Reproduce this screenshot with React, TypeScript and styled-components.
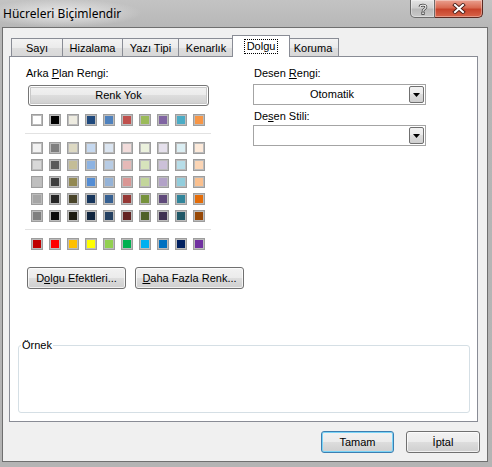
import styled, { createGlobalStyle } from 'styled-components';

const GlobalStyle = createGlobalStyle`
  html, body {
    margin: 0;
    padding: 0;
    background: #b8b8b8;
  }
  body {
    font-family: "Liberation Sans", Arial, sans-serif;
    font-size: 11px;
    color: #000;
  }
`;

const Window = styled.div`
  width: 492px;
  height: 467px;
  box-sizing: border-box;
  padding: 0 4px 0 2px;
  display: flex;
  flex-direction: column;
  background: linear-gradient(#c3c3c3, #b6b6b6 30px, #b4b4b4);
`;

const TitleBar = styled.div`
  height: 27px;
  flex: none;
  display: flex;
  align-items: flex-start;
  margin-left: -2px;
  margin-right: 5px;
  background: radial-gradient(ellipse 80px 14px at 62px 13px, rgba(236, 236, 236, 0.95), rgba(236, 236, 236, 0));
`;

const Title = styled.div`
  flex: 1;
  padding: 6px 0 0 3px;
  font-family: "Noto Sans", "Open Sans", sans-serif;
  font-size: 12px;
  line-height: 15px;
  color: #000;
`;

const CaptionButton = styled.div<{ $close?: boolean }>`
  height: 18px;
  width: ${(p) => (p.$close ? 48 : 25)}px;
  box-sizing: border-box;
  display: flex;
  align-items: center;
  justify-content: center;
  border: 1px solid ${(p) => (p.$close ? '#5b2a22' : '#6b6b6b')};
  border-top: none;
  border-left: ${(p) => (p.$close ? 'none' : '1px solid #6b6b6b')};
  border-radius: ${(p) => (p.$close ? '0 0 5px 0' : '0 0 0 5px')};
  background: ${(p) =>
    p.$close
      ? 'linear-gradient(#eaa090, #d96a52 45%, #c7432b 55%, #d8654a)'
      : 'linear-gradient(#e4e4e4, #cfcfcf 45%, #b9b9b9 55%, #c9c9c9)'};
  box-shadow: inset 0 0 0 1px rgba(255, 255, 255, 0.35);
`;

const Client = styled.div`
  width: 486px;
  height: 435px;
  box-sizing: border-box;
  border: 1px solid #6f6f6f;
  background: #f0f0f0;
  padding: 7px 6px 0 6px;
  display: flex;
  flex-direction: column;
`;

const TabStrip = styled.div`
  height: 21px;
  display: flex;
  align-items: flex-end;
  padding-left: 2px;
  position: relative;
  z-index: 1;
`;

const Tab = styled.div<{ $w: number; $active?: boolean }>`
  width: ${(p) => p.$w}px;
  box-sizing: border-box;
  height: ${(p) => (p.$active ? 22 : 18)}px;
  margin: ${(p) => (p.$active ? '0 -2px -1px -2px' : '0')};
  border: 1px solid #898c95;
  border-bottom: none;
  border-left: ${(p) => (p.$active ? '1px solid #898c95' : 'none')};
  background: ${(p) => (p.$active ? '#fff' : 'linear-gradient(#f3f3f3, #ebebeb 50%, #dedede 50%, #d8d8d8)')};
  display: flex;
  align-items: center;
  justify-content: center;
  padding-top: ${(p) => (p.$active ? 0 : 1)}px;
  position: relative;
  z-index: ${(p) => (p.$active ? 2 : 1)};

  &:first-child {
    border-left: 1px solid #898c95;
  }
`;

const Focus = styled.span`
  outline: 1px dotted #000;
  padding: 0 2px;
  line-height: 13px;
`;

const Panel = styled.div`
  width: 469px;
  height: 366px;
  box-sizing: border-box;
  border: 1px solid #898c95;
  background: #fff;
  display: flex;
  flex-direction: column;
`;

const Top = styled.div`
  display: flex;
  padding: 10px 0 0 15px;
  gap: 42px;
`;

const LeftCol = styled.div`
  width: 186px;
  flex: none;
  display: flex;
  flex-direction: column;
`;

const RightCol = styled.div`
  width: 173px;
  flex: none;
  display: flex;
  flex-direction: column;
`;

const Label = styled.div<{ $mt?: number }>`
  line-height: 13px;
  height: 13px;
  margin-top: ${(p) => p.$mt ?? 0}px;
  padding-left: 1px;
  white-space: nowrap;
`;

const Button = styled.div<{ $w: number; $default?: boolean }>`
  width: ${(p) => p.$w}px;
  flex: none;
  height: 22px;
  box-sizing: border-box;
  border: 1px solid ${(p) => (p.$default ? '#3c7fb1' : '#707070')};
  border-radius: 3px;
  background: linear-gradient(#f2f2f2, #ebebeb 50%, #dddddd 50%, #cfcfcf);
  box-shadow: inset 0 0 0 1px ${(p) => (p.$default ? '#7bd4f7' : 'rgba(255,255,255,0.7)')};
  display: flex;
  align-items: center;
  justify-content: center;
  white-space: nowrap;
  line-height: 13px;
`;

const WideButton = styled(Button)`
  margin: 5px 0 0 3px;
  height: 21px;
  border-color: #767676;
  box-shadow: inset 0 0 0 1px #fff, inset 0 0 0 2px #c8c8c8;
`;

const SwatchRow = styled.div<{ $mt: number }>`
  display: flex;
  gap: 6px;
  margin: ${(p) => p.$mt}px 0 0 6px;
`;

const SwatchGrid = styled.div`
  display: flex;
  flex-direction: column;
  gap: 5px;
  margin-top: 8px;
`;

const Swatch = styled.div<{ $c: string }>`
  width: 12px;
  height: 12px;
  flex: none;
  box-sizing: border-box;
  border: 1px solid #9d9d9d;
  box-shadow: inset 0 0 0 1px #bcbcbc;
  background: ${(p) => p.$c};
`;

const Separator = styled.div`
  height: 1px;
  margin-top: 7px;
  background: #e2e2e2;
`;

const ButtonRow = styled.div`
  display: flex;
  gap: 9px;
  margin: 17px 0 0 2px;
`;

const Combo = styled.div<{ $mt: number }>`
  height: 21px;
  margin-top: ${(p) => p.$mt}px;
  box-sizing: border-box;
  border: 1px solid #a4a4a4;
  background: #fff;
  display: flex;
  align-items: stretch;
  padding: 1px;
`;

const ComboText = styled.div`
  flex: 1;
  display: flex;
  align-items: center;
  justify-content: center;
  line-height: 13px;
`;

const DropButton = styled.div`
  width: 15px;
  box-sizing: border-box;
  border: 1px solid #707070;
  border-radius: 2px;
  background: linear-gradient(#f2f2f2, #ebebeb 50%, #dddddd 50%, #cfcfcf);
  display: flex;
  align-items: center;
  justify-content: center;
`;

const Group = styled.fieldset`
  margin: auto 7px 8px 8px;
  height: 74px;
  box-sizing: border-box;
  border: 1px solid #d5dfe5;
  border-radius: 3px;
  padding: 0;
  min-width: 0;
`;

const Legend = styled.legend`
  padding: 0 1px;
  margin-left: 2px;
  line-height: 13px;
`;

const Footer = styled.div`
  display: flex;
  justify-content: flex-end;
  gap: 12px;
  margin: 9px 1px 0 0;
`;

const themeRow = ['#FFFFFF', '#000000', '#EEECE1', '#1F497D', '#4F81BD', '#C0504D', '#9BBB59', '#8064A2', '#4BACC6', '#F79646'];

const shades = [
  ['#F2F2F2', '#7F7F7F', '#DDD9C3', '#C6D9F0', '#DBE5F1', '#F2DCDB', '#EBF1DD', '#E5E0EC', '#DBEEF3', '#FDEADA'],
  ['#D8D8D8', '#595959', '#C4BD97', '#8DB3E2', '#B8CCE4', '#E5B9B7', '#D7E3BC', '#CCC1D9', '#B7DDE8', '#FBD5B5'],
  ['#BFBFBF', '#3F3F3F', '#938953', '#548DD4', '#95B3D7', '#D99694', '#C3D69B', '#B2A2C7', '#92CDDC', '#FAC08F'],
  ['#A5A5A5', '#262626', '#494429', '#17365D', '#366092', '#953734', '#76923C', '#5F497A', '#31859B', '#E36C09'],
  ['#7F7F7F', '#0C0C0C', '#1D1B10', '#0F243E', '#244061', '#632423', '#4F6128', '#3F3151', '#205867', '#974806'],
];

const standard = ['#C00000', '#FF0000', '#FFC000', '#FFFF00', '#92D050', '#00B050', '#00B0F0', '#0070C0', '#002060', '#7030A0'];

const tabs = [
  { label: 'Sayı', w: 52 },
  { label: 'Hizalama', w: 60 },
  { label: 'Yazı Tipi', w: 56 },
  { label: 'Kenarlık', w: 55 },
  { label: 'Dolgu', w: 58, active: true },
  { label: 'Koruma', w: 51 },
];

const Arrow = () => (
  <svg width="7" height="4" viewBox="0 0 7 4">
    <path d="M0 0h7L3.5 4z" fill="#000" />
  </svg>
);

const App = () => (
  <>
    <GlobalStyle />
    <Window>
      <TitleBar>
        <Title>Hücreleri Biçimlendir</Title>
        <CaptionButton>
          <svg width="10" height="12" viewBox="0 0 10 12">
            <path d="M2 4 C2 1.5 8 1.5 8 4 C8 6 5 6 5 8" fill="none" stroke="#3a3a3a" strokeWidth="2.6" />
            <path d="M2 4 C2 1.5 8 1.5 8 4 C8 6 5 6 5 8" fill="none" stroke="#f4f4f4" strokeWidth="1.2" />
            <rect x="3.8" y="9" width="2.4" height="2.4" fill="#f4f4f4" stroke="#3a3a3a" strokeWidth="0.8" />
          </svg>
        </CaptionButton>
        <CaptionButton $close>
          <svg width="14" height="11" viewBox="0 0 14 11">
            <path d="M3 2 L11 9 M11 2 L3 9" stroke="#4a1e18" strokeWidth="3.8" strokeLinecap="square" />
            <path d="M3 2 L11 9 M11 2 L3 9" stroke="#ffffff" strokeWidth="2" strokeLinecap="square" />
          </svg>
        </CaptionButton>
      </TitleBar>
      <Client>
        <TabStrip>
          {tabs.map((t) => (
            <Tab key={t.label} $w={t.w} $active={t.active}>
              {t.active ? <Focus>{t.label}</Focus> : t.label}
            </Tab>
          ))}
        </TabStrip>
        <Panel>
          <Top>
            <LeftCol>
              <Label>
                Arka <u>P</u>lan Rengi:
              </Label>
              <WideButton $w={181}>Renk Yok</WideButton>
              <SwatchRow $mt={8}>
                {themeRow.map((c) => (
                  <Swatch key={c} $c={c} />
                ))}
              </SwatchRow>
              <Separator />
              <SwatchGrid>
                {shades.map((row, i) => (
                  <SwatchRow key={i} $mt={0}>
                    {row.map((c) => (
                      <Swatch key={c} $c={c} />
                    ))}
                  </SwatchRow>
                ))}
              </SwatchGrid>
              <Separator />
              <SwatchRow $mt={8}>
                {standard.map((c) => (
                  <Swatch key={c} $c={c} />
                ))}
              </SwatchRow>
              <ButtonRow>
                <Button $w={99}>
                  D<u>o</u>lgu Efektleri...
                </Button>
                <Button $w={109}>
                  <u>D</u>aha Fazla Renk...
                </Button>
              </ButtonRow>
            </LeftCol>
            <RightCol>
              <Label>
                Desen <u>R</u>engi:
              </Label>
              <Combo $mt={4}>
                <ComboText>Otomatik</ComboText>
                <DropButton>
                  <Arrow />
                </DropButton>
              </Combo>
              <Label $mt={5}>
                De<u>s</u>en Stili:
              </Label>
              <Combo $mt={2}>
                <ComboText />
                <DropButton>
                  <Arrow />
                </DropButton>
              </Combo>
            </RightCol>
          </Top>
          <Group>
            <Legend>Örnek</Legend>
          </Group>
        </Panel>
        <Footer>
          <Button $w={73} $default>
            Tamam
          </Button>
          <Button $w={74}>İptal</Button>
        </Footer>
      </Client>
    </Window>
  </>
);

export default App;
